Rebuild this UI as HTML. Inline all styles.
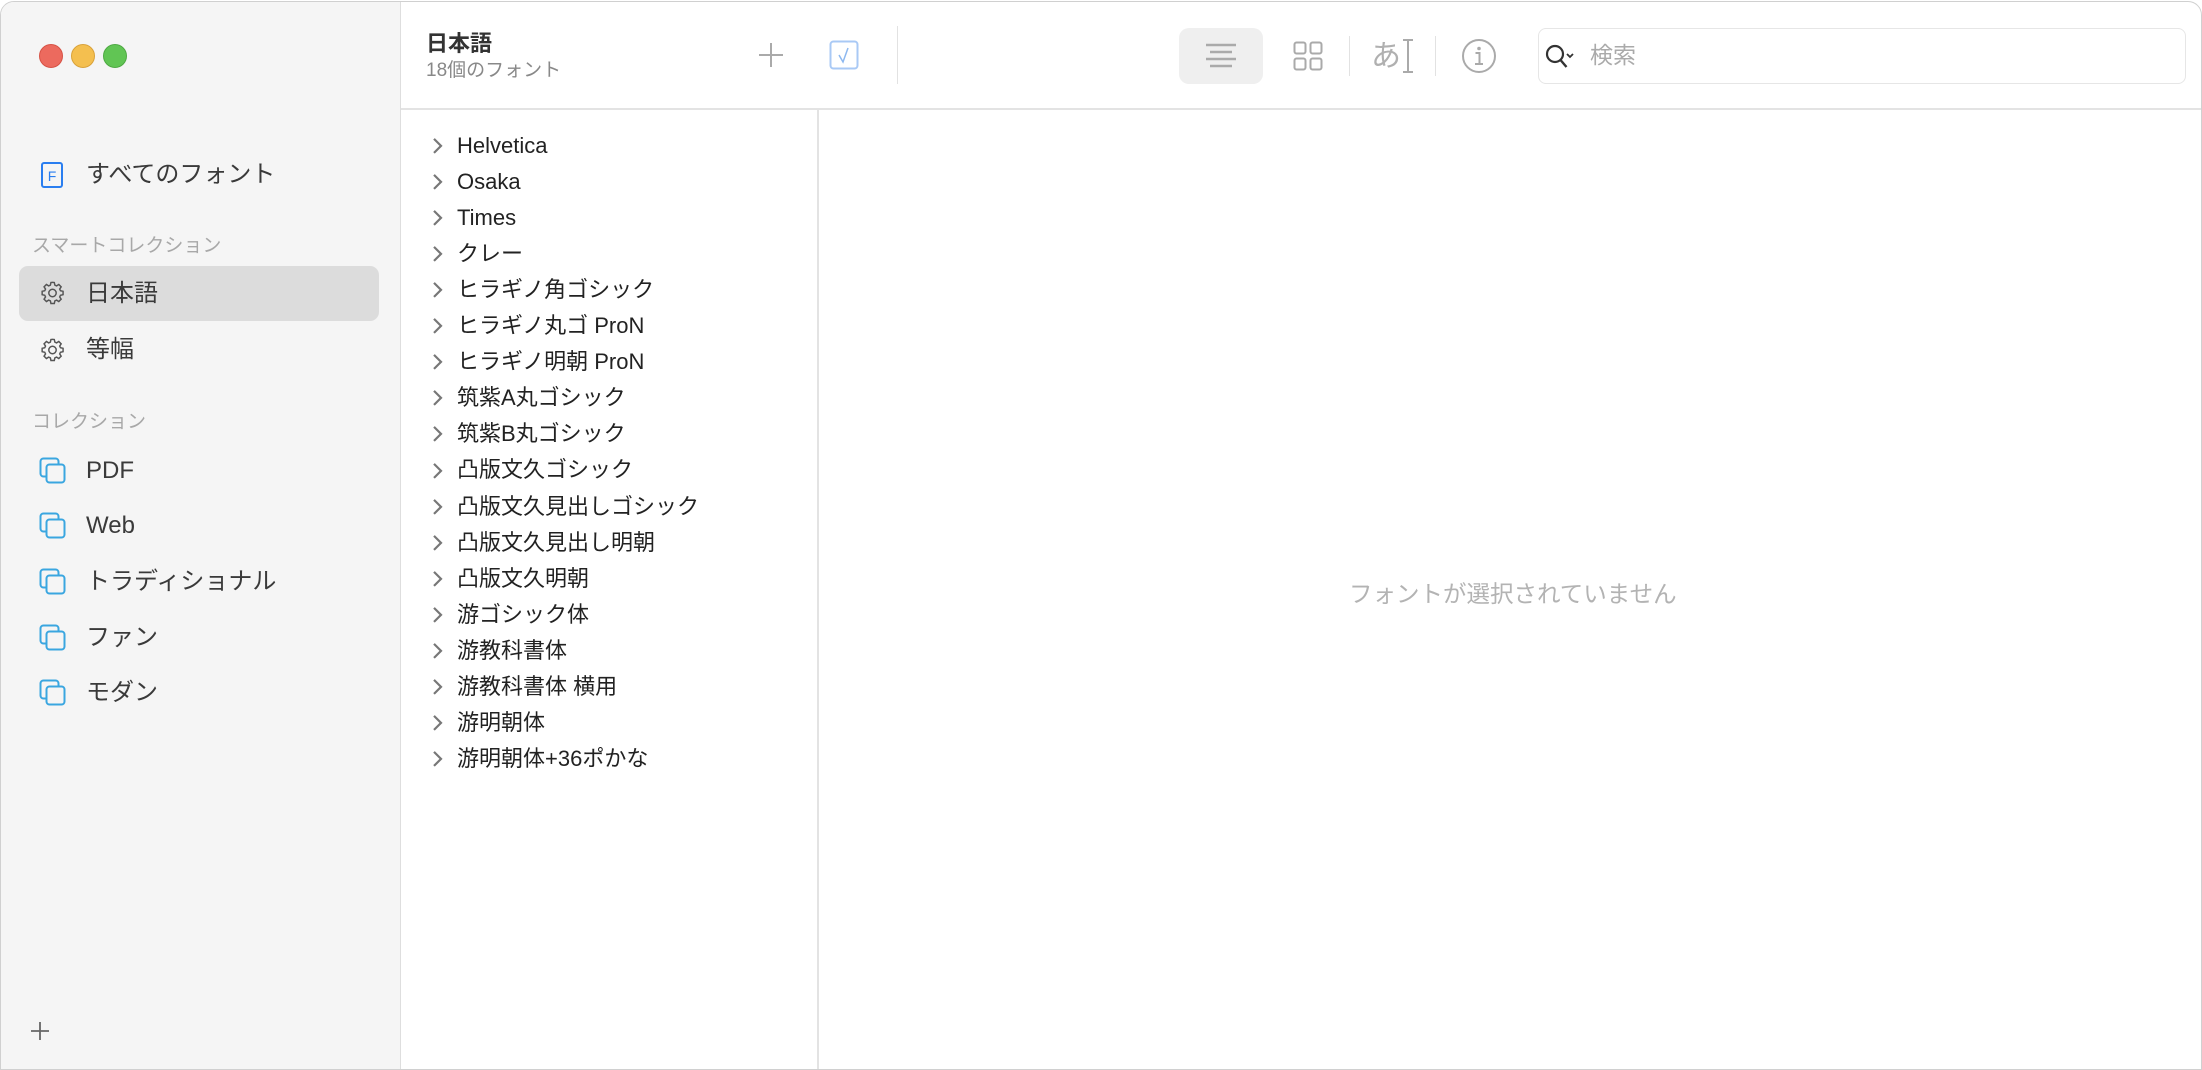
<!DOCTYPE html>
<html><head><meta charset="utf-8"><style>
*{margin:0;padding:0;box-sizing:border-box;line-height:1.1}
body{width:2202px;height:1070px;background:#fff;position:relative;overflow:hidden;font-family:"Liberation Sans","Noto Sans CJK JP",sans-serif}
.win{position:absolute;left:0;top:1px;width:2202px;height:1069px;border:1px solid #d0d0d0;border-radius:14px 14px 0 0;overflow:hidden;background:#fff}
.side{position:absolute;left:0;top:0;width:400px;height:1070px;background:#f5f5f5;border-right:1px solid #dedede}
.tl{position:absolute;top:42px;width:24px;height:24px;border-radius:50%}
.abs{position:absolute;white-space:nowrap}
.si{position:absolute;left:85px;font-size:24px;color:#3a3a3a;transform:translateY(-50%)}
.sh{position:absolute;left:31px;font-size:19px;color:#a8a8a8;transform:translateY(-50%)}
.ic{position:absolute;left:38px;transform:translateY(-50%)}
.li{position:absolute;left:430px;font-size:22px;color:#222;transform:translateY(-50%);display:flex;align-items:center}
.li svg{margin-right:14px}
.vd{position:absolute;width:1px;background:#e2e2e2}
</style></head><body>
<div class="win">
<div class="side">
<div class="tl" style="left:38px;background:#ec6a5e;border:1px solid #d65245"></div>
<div class="tl" style="left:70px;background:#f4bf4f;border:1px solid #d9a23a"></div>
<div class="tl" style="left:102px;background:#61c554;border:1px solid #4ea943"></div>

<svg class="ic" style="top:173px;left:40px" width="22" height="26" viewBox="0 0 22 26"><rect x="1" y="1" width="20" height="24" rx="2" fill="none" stroke="#2a7ef0" stroke-width="2"/><text x="11" y="19" font-size="14" text-anchor="middle" fill="#2a7ef0" font-family="Liberation Sans">F</text></svg>
<div class="si" style="top:173px">すべてのフォント</div>
<div class="sh" style="top:245px">スマートコレクション</div>
<div style="position:absolute;left:18px;top:264px;width:360px;height:55px;background:#dcdcdc;border-radius:9px"></div>
<svg class="ic" style="top:291px" width="27" height="27" viewBox="0 0 24 24"><path d="M12 2.5l1.6.2.5 2.3 1.5.7 2-1.3 2.1 2.1-1.3 2 .7 1.5 2.3.5v3l-2.3.5-.7 1.5 1.3 2-2.1 2.1-2-1.3-1.5.7-.5 2.3h-3l-.5-2.3-1.5-.7-2 1.3-2.1-2.1 1.3-2-.7-1.5-2.3-.5v-3l2.3-.5.7-1.5-1.3-2 2.1-2.1 2 1.3 1.5-.7.5-2.3z" fill="none" stroke="#555" stroke-width="1.3"/><circle cx="12" cy="12" r="3.3" fill="none" stroke="#555" stroke-width="1.3"/></svg>
<div class="si" style="top:292px">日本語</div>
<svg class="ic" style="top:348px" width="27" height="27" viewBox="0 0 24 24"><path d="M12 2.5l1.6.2.5 2.3 1.5.7 2-1.3 2.1 2.1-1.3 2 .7 1.5 2.3.5v3l-2.3.5-.7 1.5 1.3 2-2.1 2.1-2-1.3-1.5.7-.5 2.3h-3l-.5-2.3-1.5-.7-2 1.3-2.1-2.1 1.3-2-.7-1.5-2.3-.5v-3l2.3-.5.7-1.5-1.3-2 2.1-2.1 2 1.3 1.5-.7.5-2.3z" fill="none" stroke="#555" stroke-width="1.3"/><circle cx="12" cy="12" r="3.3" fill="none" stroke="#555" stroke-width="1.3"/></svg>
<div class="si" style="top:348px">等幅</div>
<div class="sh" style="top:421px">コレクション</div>

<svg class="ic" style="top:469px" width="28" height="28" viewBox="0 0 28 28"><rect x="1.5" y="1.5" width="18" height="18" rx="3" fill="#f5f5f5" stroke="#3aa6e0" stroke-width="2"/><rect x="7.5" y="7.5" width="18" height="18" rx="3" fill="#f5f5f5" stroke="#3aa6e0" stroke-width="2"/></svg>
<div class="si" style="top:469px">PDF</div>
<svg class="ic" style="top:524px" width="28" height="28" viewBox="0 0 28 28"><rect x="1.5" y="1.5" width="18" height="18" rx="3" fill="#f5f5f5" stroke="#3aa6e0" stroke-width="2"/><rect x="7.5" y="7.5" width="18" height="18" rx="3" fill="#f5f5f5" stroke="#3aa6e0" stroke-width="2"/></svg>
<div class="si" style="top:524px">Web</div>
<svg class="ic" style="top:580px" width="28" height="28" viewBox="0 0 28 28"><rect x="1.5" y="1.5" width="18" height="18" rx="3" fill="#f5f5f5" stroke="#3aa6e0" stroke-width="2"/><rect x="7.5" y="7.5" width="18" height="18" rx="3" fill="#f5f5f5" stroke="#3aa6e0" stroke-width="2"/></svg>
<div class="si" style="top:580px">トラディショナル</div>
<svg class="ic" style="top:636px" width="28" height="28" viewBox="0 0 28 28"><rect x="1.5" y="1.5" width="18" height="18" rx="3" fill="#f5f5f5" stroke="#3aa6e0" stroke-width="2"/><rect x="7.5" y="7.5" width="18" height="18" rx="3" fill="#f5f5f5" stroke="#3aa6e0" stroke-width="2"/></svg>
<div class="si" style="top:636px">ファン</div>
<svg class="ic" style="top:691px" width="28" height="28" viewBox="0 0 28 28"><rect x="1.5" y="1.5" width="18" height="18" rx="3" fill="#f5f5f5" stroke="#3aa6e0" stroke-width="2"/><rect x="7.5" y="7.5" width="18" height="18" rx="3" fill="#f5f5f5" stroke="#3aa6e0" stroke-width="2"/></svg>
<div class="si" style="top:691px">モダン</div>

<svg class="abs" style="left:29px;top:1019px" width="20" height="20" viewBox="0 0 20 20"><path d="M10 1v18M1 10h18" stroke="#666" stroke-width="1.8"/></svg>
</div>

<div class="abs" style="left:425px;top:30px;font-size:22px;font-weight:bold;color:#333">日本語</div>
<div class="abs" style="left:425px;top:59px;font-size:19px;color:#888">18個のフォント</div>
<svg class="abs" style="left:757px;top:40px" width="26" height="26" viewBox="0 0 26 26"><path d="M13 1v24M1 13h24" stroke="#aaa" stroke-width="2"/></svg>
<svg class="abs" style="left:828px;top:38px" width="30" height="30" viewBox="0 0 30 30"><rect x="1.5" y="1.5" width="27" height="27" rx="3" fill="none" stroke="#a9c9f5" stroke-width="2"/><path d="M10 15l4 7 5-14" fill="none" stroke="#8db8f0" stroke-width="1.5"/></svg>
<div class="vd" style="left:896px;top:24px;height:58px"></div>

<div style="position:absolute;left:1178px;top:26px;width:84px;height:56px;background:#efefef;border-radius:10px"></div>
<svg class="abs" style="left:1203px;top:40px" width="34" height="28" viewBox="0 0 34 28"><path d="M2 3h30M6 10h22M2 17h30M6 24h22" stroke="#aaa" stroke-width="2.4"/></svg>
<svg class="abs" style="left:1292px;top:39px" width="30" height="30" viewBox="0 0 30 30"><rect x="1.5" y="1.5" width="11" height="11" rx="2" fill="none" stroke="#aaa" stroke-width="2"/><rect x="17.5" y="1.5" width="11" height="11" rx="2" fill="none" stroke="#aaa" stroke-width="2"/><rect x="1.5" y="17.5" width="11" height="11" rx="2" fill="none" stroke="#aaa" stroke-width="2"/><rect x="17.5" y="17.5" width="11" height="11" rx="2" fill="none" stroke="#aaa" stroke-width="2"/></svg>
<div class="vd" style="left:1348px;top:34px;height:40px"></div>
<div class="abs" style="left:1370px;top:38px;font-size:30px;color:#b0b0b0">あ</div>
<svg class="abs" style="left:1400px;top:36px" width="14" height="36" viewBox="0 0 14 36"><path d="M2 2h10M7 2v32M2 34h10" stroke="#aaa" stroke-width="2"/></svg>
<div class="vd" style="left:1434px;top:34px;height:40px"></div>
<svg class="abs" style="left:1460px;top:36px" width="36" height="36" viewBox="0 0 36 36"><circle cx="18" cy="18" r="16" fill="none" stroke="#aaa" stroke-width="2"/><circle cx="18" cy="10.5" r="1.8" fill="#aaa"/><path d="M14.5 15h4v11M14 26h8" fill="none" stroke="#aaa" stroke-width="2"/></svg>

<div style="position:absolute;left:1537px;top:26px;width:648px;height:56px;border:1px solid #e6e6e6;border-radius:8px;background:#fff"></div>
<svg class="abs" style="left:1543px;top:41px" width="34" height="30" viewBox="0 0 34 30"><circle cx="11" cy="11" r="8" fill="none" stroke="#333" stroke-width="2.2"/><path d="M16.5 17l6 7" stroke="#333" stroke-width="2.4"/><path d="M23 11l3 3 3-3" fill="none" stroke="#333" stroke-width="1.8"/></svg>
<div class="abs" style="left:1589px;top:41px;font-size:23px;color:#aaa">検索</div>

<div style="position:absolute;left:400px;top:106px;width:1802px;height:2px;background:#e3e3e3"></div>
<div style="position:absolute;left:816px;top:107px;width:2px;height:963px;background:#e3e3e3"></div>

<div id="list"></div>
<div class="abs" style="left:1348px;top:580px;font-size:23.5px;color:#b3b3b3">フォントが選択されていません</div>
</div>
<script>
var items=["Helvetica","Osaka","Times","クレー","ヒラギノ角ゴシック","ヒラギノ丸ゴ ProN","ヒラギノ明朝 ProN","筑紫A丸ゴシック","筑紫B丸ゴシック","凸版文久ゴシック","凸版文久見出しゴシック","凸版文久見出し明朝","凸版文久明朝","游ゴシック体","游教科書体","游教科書体 横用","游明朝体","游明朝体+36ポかな"];
var h="";items.forEach(function(t,i){var y=144+i*36.05;h+='<div class="li" style="top:'+y+'px"><svg width="12" height="18" viewBox="0 0 12 18"><path d="M3 2l7 7-7 7" fill="none" stroke="#777" stroke-width="2.2"/></svg><span>'+t+'</span></div>';});
document.getElementById("list").innerHTML=h;
</script>
</body></html>
